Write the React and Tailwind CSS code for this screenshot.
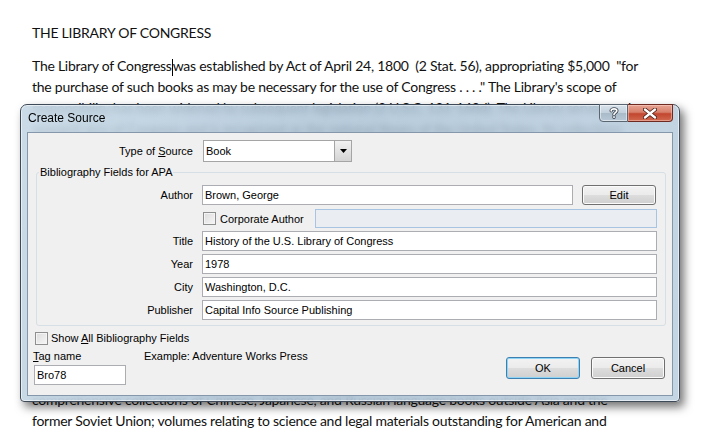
import React from 'react';

const docLines = [
  'the purchase of such books as may be necessary for the use of Congress . . . ." The Library\'s scope of',
  'responsibility has been widened by subsequent legislation (2 U.S.C. 131-168d). The Library serves as the',
  'research arm of Congress and is recognized as the national library of the United States. Its collections',
  'are universal, not limited by subject, format, or national boundary, although the research needs of',
  'the Congress and the United States government generally are of the highest priority. The Library has',
  'collections of books, manuscripts, maps, music, motion pictures, photographs, prints and drawings,',
  'and recordings that are among the finest in the world. Among the outstanding collections are the',
  'papers of twenty-three Presidents of the United States, from George Washington through Calvin',
  "Coolidge; the largest collection of incunabula in the Western Hemisphere; one of the world's largest",
  'collections of maps and atlases; extensive holdings of American music, including the papers of',
  'major composers; a large collection of motion pictures and television programs; the most complete',
  'record of copyright deposits in the nation; foreign law collections of unmatched depth and breadth;',
  'the most extensive holdings of American newspapers, periodicals, pamphlets, and ephemera. The',
  'Library also holds large collections of materials in more than four hundred and fifty languages and',
  'serves scholars, researchers, and the general public through its reading rooms and services. The',
  'comprehensive collections of Chinese, Japanese, and Russian language books outside Asia and the',
  'former Soviet Union; volumes relating to science and legal materials outstanding for American and',
];

const btn =
  'w-[74px] rounded-[3px] border bg-[linear-gradient(#f2f2f2_0%,#ebebeb_50%,#dddddd_51%,#cfcfcf_100%)] text-center';

function Checkbox() {
  return (
    <span className="inline-block w-[13px] h-[13px] border border-[#8e8f8f] bg-[linear-gradient(135deg,#dcdcdc,#f6f6f6)] shadow-[inset_0_0_0_1px_#f4f4f4] shrink-0" />
  );
}

function Field({ label, value }) {
  return (
    <div className="flex items-center h-[20px] mb-[3px]">
      <span className="w-[156px] text-right shrink-0">{label}</span>
      <div className="ml-[9px] flex-1 h-[20px] bg-white border border-[#abadb3] pl-[2px] leading-[18px]">
        {value}
      </div>
    </div>
  );
}

function Dialog() {
  return (
    <div className="absolute left-[20px] top-[104px] w-[660px] h-[298px] rounded-t-[7px] rounded-b-[4px] border border-[#3e4a57] bg-[linear-gradient(100deg,rgba(196,214,228,0.88)_0%,rgba(168,192,212,0.82)_45%,rgba(186,206,222,0.86)_100%)] backdrop-blur-[3px] shadow-[4px_5px_10px_rgba(0,0,0,0.55),inset_0_0_0_1px_rgba(255,255,255,0.55)] px-[6px] pb-[5px] flex flex-col">
      <div className="flex h-[27px] shrink-0">
        <span className="pt-[6px] pl-[1px] text-[12px] leading-[14px] text-black">Create Source</span>
        <div className="ml-auto flex h-[18px] -mt-px">
          <div className="w-[29px] h-full rounded-bl-[4px] border border-[#5b6673] bg-[linear-gradient(#d8e2ea_0%,#c2d0dc_50%,#a9bac9_51%,#b8c8d6_100%)] shadow-[inset_0_0_0_1px_rgba(255,255,255,0.5)] flex items-center justify-center">
            <svg width="10" height="12" viewBox="0 0 10 12">
              <path d="M2.2 3.8 C2.2 1.2 7.8 1.2 7.8 3.8 C7.8 5.6 5 5.6 5 7.6 M5 9.8 L5 10.2" fill="none" stroke="#3b4652" strokeWidth="3.4" strokeLinecap="round" />
              <path d="M2.2 3.8 C2.2 1.2 7.8 1.2 7.8 3.8 C7.8 5.6 5 5.6 5 7.6 M5 9.8 L5 10.2" fill="none" stroke="#ffffff" strokeWidth="1.7" strokeLinecap="round" />
            </svg>
          </div>
          <div className="w-[45px] h-full rounded-br-[4px] border border-l-0 border-[#6e2a20] bg-[linear-gradient(#e8a493_0%,#d7806b_45%,#c2462f_55%,#d16a50_100%)] shadow-[inset_0_0_0_1px_rgba(255,220,210,0.45)] flex items-center justify-center">
            <svg width="14" height="11" viewBox="0 0 14 11">
              <path d="M2 1.5 L12 9.5 M12 1.5 L2 9.5" stroke="#4a1a12" strokeWidth="4" strokeLinecap="round" />
              <path d="M2 1.5 L12 9.5 M12 1.5 L2 9.5" stroke="#ffffff" strokeWidth="2.4" strokeLinecap="round" />
            </svg>
          </div>
        </div>
      </div>

      <div className="flex-1 bg-[#f0f0f0] border border-[#8597aa] flex flex-col text-[11px] leading-[14px] text-black">
        <div className="flex items-center mt-[7px]">
          <span className="w-[165px] text-right">
            Type of <span className="underline">S</span>ource
          </span>
          <div className="ml-[10px] w-[149px] h-[22px] bg-white border border-[#a5a5a5] flex items-center">
            <span className="pl-[2px] flex-1">Book</span>
            <div className="w-[17px] h-[20px] border-l border-[#a5a5a5] bg-[linear-gradient(#f2f2f2,#d4d4d4)] flex items-center justify-center">
              <svg width="7" height="4" viewBox="0 0 7 4">
                <path d="M0 0 H7 L3.5 4 Z" fill="#000" />
              </svg>
            </div>
          </div>
        </div>

        <fieldset className="ml-[8px] mr-[6px] mt-[3px] border border-[#d5dfe5] rounded-[3px] pl-0 pr-[8px] pt-[6px] pb-[2px]">
          <legend className="ml-[2px] px-[1px]">Bibliography Fields for APA</legend>
          <div className="flex items-center h-[20px]">
            <span className="w-[156px] text-right shrink-0">Author</span>
            <div className="ml-[9px] flex-1 h-[20px] bg-white border border-[#abadb3] pl-[2px] leading-[18px]">
              Brown, George
            </div>
            <div className={btn + ' border-[#707070] shadow-[inset_0_0_0_1px_#fbfbfb] ml-[9px] mr-px h-[20px] leading-[18px]'}>
              Edit
            </div>
          </div>
          <div className="flex items-center h-[19px] mt-[4px] mb-[3px]">
            <span className="w-[166px] shrink-0" />
            <Checkbox />
            <span className="ml-[4px]">Corporate Author</span>
            <div className="ml-auto w-[342px] h-[19px] border border-[#a7c4e3] bg-[#eaeef3]" />
          </div>
          <Field label="Title" value="History of the U.S. Library of Congress" />
          <Field label="Year" value="1978" />
          <Field label="City" value="Washington, D.C." />
          <Field label="Publisher" value="Capital Info Source Publishing" />
        </fieldset>

        <div className="flex items-center mt-[5px] ml-[7px]">
          <Checkbox />
          <span className="ml-[3px]">
            Show <span className="underline">A</span>ll Bibliography Fields
          </span>
        </div>

        <div className="flex mt-[4px] ml-[5px] mr-[7px]">
          <div className="w-[93px]">
            <div className="h-[14px]">
              <span className="underline">T</span>ag name
            </div>
            <div className="ml-px mt-[2px] h-[20px] bg-white border border-[#abadb3] pl-[2px] leading-[18px]">
              Bro78
            </div>
          </div>
          <div className="ml-[18px] h-[14px]">Example: Adventure Works Press</div>
          <div className="ml-auto flex gap-[11px] mt-[8px]">
            <div className={btn + ' border-[#3c7fb1] shadow-[inset_0_0_0_1px_#8fd4f4] h-[22px] leading-[20px]'}>OK</div>
            <div className={btn + ' border-[#707070] shadow-[inset_0_0_0_1px_#fbfbfb] h-[22px] leading-[20px]'}>
              Cancel
            </div>
          </div>
        </div>
      </div>
    </div>
  );
}

export default function App() {
  return (
    <div className="relative w-[704px] h-[432px] overflow-hidden bg-white font-['Liberation_Sans',sans-serif]">
      <div className="pl-[32px] pt-[22px] font-['Lato',sans-serif] text-[14px] tracking-[-0.25px] text-[#111] whitespace-pre">
        <div className="h-[21px] leading-[21px]">THE LIBRARY OF CONGRESS</div>
        <div className="mt-[12px] h-[21px] leading-[21px]">
          The Library of Congress
          <span className="inline-block w-px h-[17px] bg-black align-middle" />
          was established by Act of April 24, 1800  (2 Stat. 56), appropriating $5,000  "for
        </div>
        {docLines.map((line, i) => (
          <div key={i} className="h-[20.9px] leading-[21px]">
            {line}
          </div>
        ))}
      </div>
      <Dialog />
    </div>
  );
}
